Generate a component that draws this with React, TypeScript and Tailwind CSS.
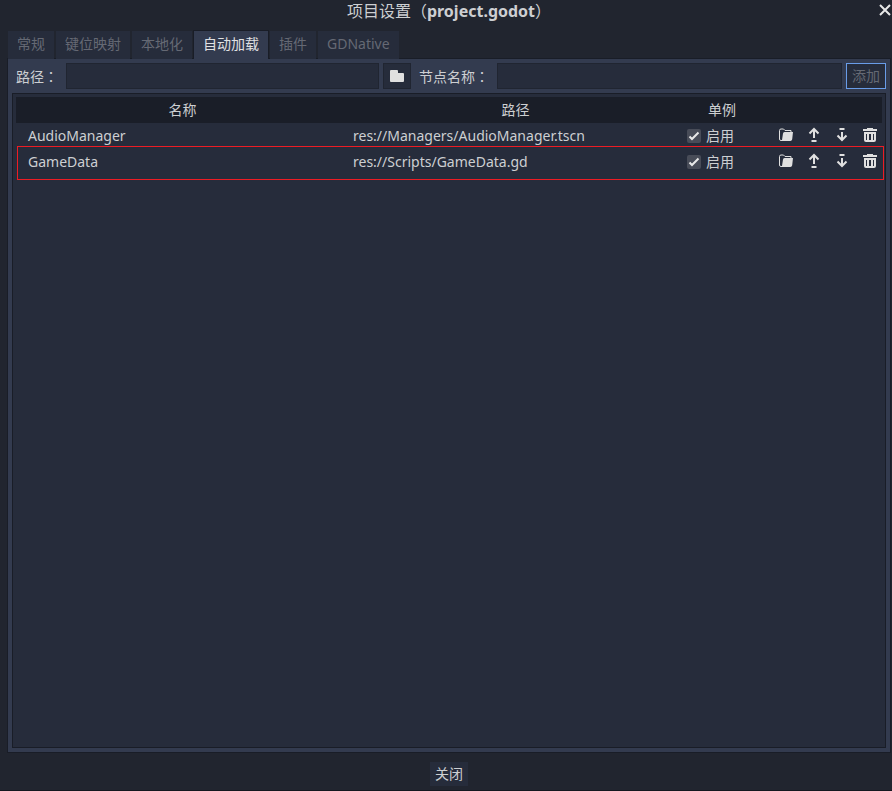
import React, { useState } from "react";
import { clsx } from "clsx";

interface Autoload {
  name: string;
  path: string;
  singleton: boolean;
}

const TABS = ["常规", "键位映射", "本地化", "自动加载", "插件", "GDNative"];

const AUTOLOADS: Autoload[] = [
  { name: "AudioManager", path: "res://Managers/AudioManager.tscn", singleton: true },
  { name: "GameData", path: "res://Scripts/GameData.gd", singleton: true },
];

const inputClass =
  "h-[26px] min-w-0 border border-[#202531] bg-[#262c3b] px-1 text-[#cdcfd2] outline-none focus:border-[#699ce8]";

const Colon = () => <span className="font-['Noto_Sans_CJK_TC',sans-serif]">：</span>;

const FolderIcon = () => (
  <svg width="16" height="16" viewBox="0 0 16 16" fill="#e0e0e0" aria-hidden="true">
    <path d="M2 2a1 1 0 0 0-1 1v10a1 1 0 0 0 1 1h12a1 1 0 0 0 1-1V6a1 1 0 0 0-1-1H9V3a1 1 0 0 0-1-1z" />
  </svg>
);

const OpenIcon = () => (
  <svg width="16" height="16" viewBox="0 0 16 16" aria-hidden="true">
    <path d="M4 13.500H3A1.500 1.500 0 0 1 1.500 12V3.500A1.500 1.500 0 0 1 3 2h2.500L7 3.500h6V5" fill="none" stroke="#e0e0e0" />
    <path d="M6.500 5H15l-.8 7.300A2 2 0 0 1 12.200 14H3l1-1 1-6.500A1.700 1.700 0 0 1 6.500 5z" fill="#e0e0e0" />
  </svg>
);

const MoveUpIcon = () => (
  <svg width="16" height="16" viewBox="0 0 16 16" fill="none" stroke="#e0e0e0" strokeWidth="2" aria-hidden="true">
    <path d="M8 11V2.500M3.500 6.500 8 2l4.500 4.500M5.500 14h5" />
  </svg>
);

const MoveDownIcon = () => (
  <svg width="16" height="16" viewBox="0 0 16 16" fill="none" stroke="#e0e0e0" strokeWidth="2" aria-hidden="true">
    <path d="M8 5v8M3.500 8.500 8 13l4.500-4.500M5.500 2h5" />
  </svg>
);

const TrashIcon = () => (
  <svg width="16" height="16" viewBox="0 0 16 16" fill="#e0e0e0" aria-hidden="true">
    <path d="M5 1v1H1v2h14V2h-4V1zM2 5v8a2 2 0 0 0 2 2h8a2 2 0 0 0 2-2V5zm2 2h1v6H4zm3 0h2v6H7zm4 0h1v6h-1z" fillRule="evenodd" />
  </svg>
);

const ROW_ACTIONS = [
  { label: "打开", Icon: OpenIcon },
  { label: "上移", Icon: MoveUpIcon },
  { label: "下移", Icon: MoveDownIcon },
  { label: "删除", Icon: TrashIcon },
];

const AutoloadRow = ({ item, onToggle }: { item: Autoload; onToggle: () => void }) => (
  <tr className="h-[26px]">
    <td className="truncate pl-3">{item.name}</td>
    <td className="truncate pl-1">{item.path}</td>
    <td className="pl-[5px]">
      <label className="flex items-center gap-[5px]">
        <span className="grid size-[14px]">
          <input
            type="checkbox"
            checked={item.singleton}
            onChange={onToggle}
            className="col-start-1 row-start-1 size-[14px] appearance-none rounded-[2px] bg-[#484c58]"
          />
          {item.singleton && (
            <svg className="pointer-events-none col-start-1 row-start-1" width="14" height="14" viewBox="0 0 14 14" fill="none" stroke="#e8e8e8" strokeWidth="2" aria-hidden="true">
              <path d="M2.500 7.500 5 10l6.500-6.500" />
            </svg>
          )}
        </span>
        启用
      </label>
    </td>
    <td className="pr-1 pb-0.5">
      <div className="flex justify-end gap-3">
        {ROW_ACTIONS.map(({ label, Icon }) => (
          <button key={label} type="button" aria-label={label}>
            <Icon />
          </button>
        ))}
      </div>
    </td>
  </tr>
);

export default function App() {
  const [activeTab, setActiveTab] = useState("自动加载");
  const [autoloads, setAutoloads] = useState(AUTOLOADS);
  const [path, setPath] = useState("");
  const [nodeName, setNodeName] = useState("");

  const toggle = (name: string) =>
    setAutoloads(autoloads.map((a) => (a.name === name ? { ...a, singleton: !a.singleton } : a)));

  return (
    <div className="flex min-h-screen flex-col border-b border-[#14171f] bg-[#21252f] pr-px pb-1 pl-[7px] font-['Noto_Sans','Noto_Sans_CJK_SC',sans-serif] text-sm leading-5 text-[#cdcfd2]">
      <header className="flex h-[30px] items-start">
        <h1 className="flex-1 text-center text-base leading-[22px]">
          项目设置（<b>project.godot</b>）
        </h1>
        <button type="button" aria-label="关闭窗口" className="-ml-3 pt-1">
          <svg width="12" height="12" viewBox="0 0 12 12" fill="none" stroke="#e8e8e8" strokeWidth="2" aria-hidden="true">
            <path d="M1 1l10 10M11 1L1 11" />
          </svg>
        </button>
      </header>

      <nav className="relative -mb-px flex" role="tablist">
        {TABS.map((tab) => (
          <button
            key={tab}
            type="button"
            role="tab"
            aria-selected={tab === activeTab}
            onClick={() => setActiveTab(tab)}
            className={clsx(
              "h-[29px] border-x border-t bg-clip-padding px-[9px] pb-0.5",
              tab === activeTab
                ? "border-[#191d27] bg-[#333b4f] text-[#e0e1e3]"
                : "border-transparent bg-[#262c3b] text-[#656974]"
            )}
          >
            {tab}
          </button>
        ))}
      </nav>

      <main className="flex flex-1 flex-col gap-1 border border-[#191d27] bg-[#333b4f] p-1">
        <form className="flex items-center pl-1" onSubmit={(e) => e.preventDefault()}>
          <label htmlFor="autoload-path" className="mr-2">
            路径<Colon />
          </label>
          <input id="autoload-path" value={path} onChange={(e) => setPath(e.target.value)} className={clsx(inputClass, "mr-1 flex-[19]")} />
          <button type="button" aria-label="浏览" className="mr-2 flex h-[26px] w-7 items-center justify-center border border-[#202531] bg-[#262c3b]">
            <FolderIcon />
          </button>
          <label htmlFor="autoload-name" className="mr-2">
            节点名称<Colon />
          </label>
          <input id="autoload-name" value={nodeName} onChange={(e) => setNodeName(e.target.value)} className={clsx(inputClass, "mr-1 flex-[21]")} />
          <button type="submit" disabled={!path || !nodeName} className="h-[26px] border border-[#699ce8] bg-[#262c3b] px-[5px] disabled:text-[#656974]">
            添加
          </button>
        </form>

        <section className="relative flex-1 border border-[#191d27] bg-[#262c3b] p-[3px]">
          <table className="w-full table-fixed border-collapse">
            <colgroup>
              <col />
              <col />
              <col className="w-20" />
              <col className="w-[120px]" />
            </colgroup>
            <thead>
              <tr className="h-[26px] bg-[#1a1e28]">
                <th className="font-normal">名称</th>
                <th className="font-normal">路径</th>
                <th className="font-normal">单例</th>
                <td />
              </tr>
            </thead>
            <tbody>
              {autoloads.map((item) => (
                <AutoloadRow key={item.name} item={item} onToggle={() => toggle(item.name)} />
              ))}
            </tbody>
          </table>
          {/* frame around the GameData row */}
          <div className="pointer-events-none absolute top-[52px] right-px left-1 h-[34px] border border-[#ed1c24]" />
        </section>
      </main>

      <footer className="flex justify-center pt-[9px]">
        <button type="button" className="h-6 bg-[#262c3b] px-[5px]">
          关闭
        </button>
      </footer>
    </div>
  );
}
